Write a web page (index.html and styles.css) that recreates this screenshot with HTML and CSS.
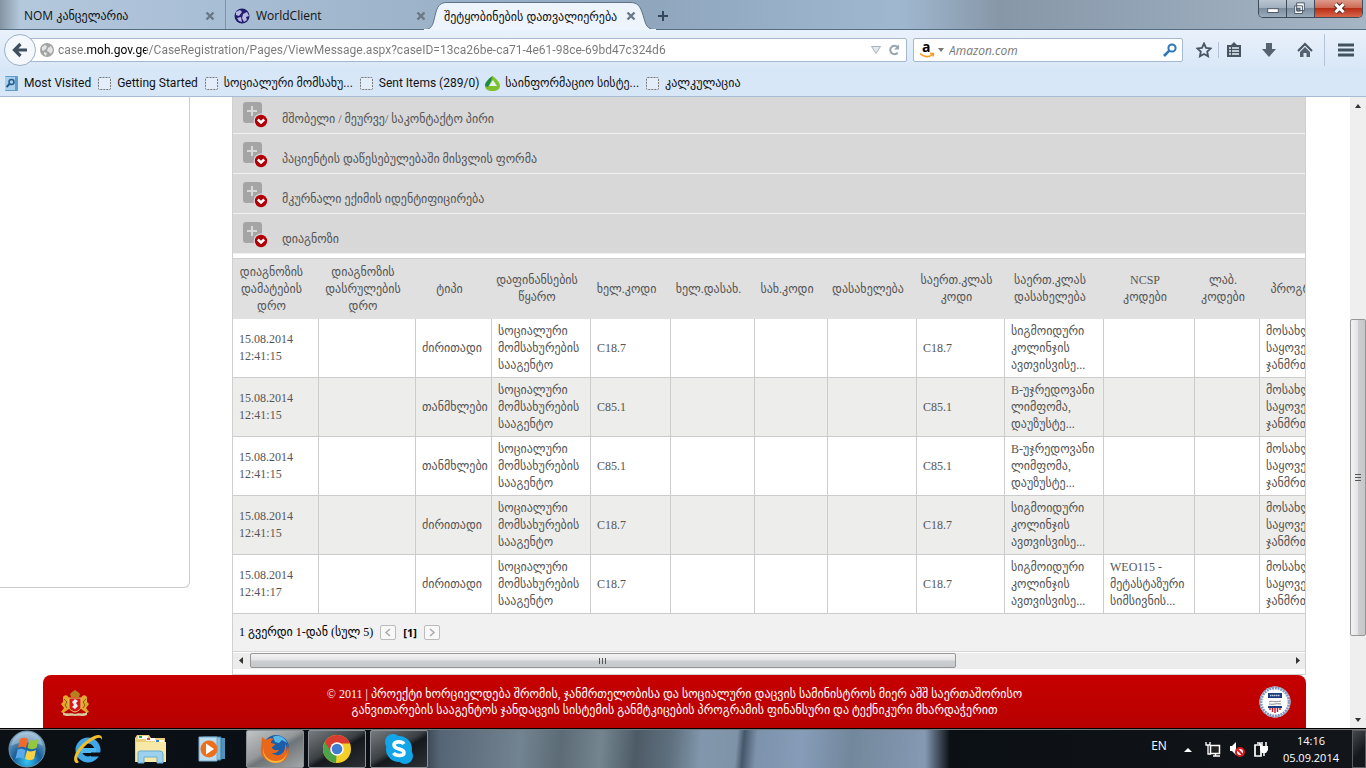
FILE: index.html
```html
<!DOCTYPE html>
<html lang="ka">

<head>
    <meta charset="UTF-8">
    <meta name="viewport" content="width=device-width, initial-scale=1.0">
    <title>შეტყობინების დათვალიერება</title>
    <link rel="stylesheet" href="styles.css">
</head>

<body>
    <!-- shared shapes -->
    <svg class="defs" width="0" height="0" aria-hidden="true">
        <defs>
            <symbol id="i-close" viewBox="0 0 10 10">
                <path d="M1.5 1.5l7 7M8.500 1.500l-7 7" stroke="#6b7785" stroke-width="2.400" fill="none" />
            </symbol>
            <symbol id="i-blank" viewBox="0 0 15 15">
                <rect x="1.500" y="1.500" width="12" height="12" rx="1" fill="#e4eefa" stroke="#777" stroke-dasharray="2 1" />
            </symbol>
            <symbol id="i-plus" viewBox="0 0 26 26">
                <rect x="0" y="0" width="19" height="21" rx="3" fill="#a5a5a5" />
                <path d="M9 4v10M4 9h10" stroke="#d8d8d8" stroke-width="2" />
                <circle cx="18" cy="19" r="7.500" fill="#d8d8d8" />
                <circle cx="18" cy="19" r="6.200" fill="#b00006" />
                <path d="M14.800 17.500l3.200 3 3.200-3" stroke="#fff" stroke-width="2.400" fill="none" />
            </symbol>
        </defs>
    </svg>

    <div class="window">
        <header class="titlebar">
            <div class="tabs">
                <button class="tab"><span class="tab-text">NOM კანცელარია</span><svg class="tab-close"><use href="#i-close" /></svg></button>
                <button class="tab">
                    <svg class="favicon" viewBox="0 0 16 16">
                        <circle cx="8" cy="8" r="7.500" fill="#221c6e" />
                        <path d="M2 4l4-2 2 2-3 4-3-1zM9 6l4-2 2 4-3 1 1 3-3 2-2-4zM3 10l4-1 1 5-3-1z" fill="#b9b8e2" />
                    </svg>
                    <span class="tab-text">WorldClient</span><svg class="tab-close"><use href="#i-close" /></svg>
                </button>
                <button class="tab active">
                    <svg class="tab-shape" viewBox="0 0 232 28" preserveAspectRatio="none">
                        <path d="M0 28C10 27 9 20 12 10C14 3 17 .5 23 .5H206C214 .5 216 4 219 13C222 23 222 27 232 28Z" fill="#edf4fc" stroke="#5d7387" />
                        <path d="M0 28H232" stroke="#edf4fc" stroke-width="2" />
                    </svg>
                    <span class="tab-text">შეტყობინების დათვალიერება</span><svg class="tab-close"><use href="#i-close" /></svg>
                </button>
                <button class="new-tab" aria-label="New tab"><svg viewBox="0 0 12 12"><path d="M6 1v10M1 6h10" stroke="#35475a" stroke-width="2" /></svg></button>
            </div>
            <div class="win-buttons">
                <button aria-label="Minimize"><svg viewBox="0 0 28 18"><rect x="9" y="9" width="11" height="4" fill="#fff" stroke="#4a5666" /></svg></button>
                <button aria-label="Restore"><svg viewBox="0 0 28 18"><path d="M10 3h8v8h-8zM8 6h8v8H8z" fill="#fff" stroke="#4a5666" /><rect x="10.500" y="8.500" width="3" height="3" fill="#71859a" stroke="#4a5666" /></svg></button>
                <button class="win-close" aria-label="Close"><svg viewBox="0 0 46 18"><path d="M20 4l8 8M28 4l-8 8" stroke="#5a2a25" stroke-width="5" /><path d="M20 4l8 8M28 4l-8 8" stroke="#fff" stroke-width="3" /></svg></button>
            </div>
        </header>

        <nav class="toolbar">
            <div class="nav-row">
                <button class="back" aria-label="Back"><svg viewBox="0 0 16 16"><path d="M8.500 2L2.500 8l6 6M3 8h12" fill="none" stroke="#3f4f5f" stroke-width="3.200" /></svg></button>
                <div class="url-box">
                    <svg class="globe" viewBox="0 0 14 14">
                        <circle cx="7" cy="7" r="7" fill="#a3a3a3" />
                        <path d="M2 4l3-2 2 1-1 3-3 2-1-1zM8 5l3-2 2 4-2 4-2-2-2-1zM4 9l3 1-1 3-2-2z" fill="#e4e4e4" />
                    </svg>
                    <input class="url" type="text" aria-label="Address" value="case.moh.gov.ge/CaseRegistration/Pages/ViewMessage.aspx?caseID=13ca26be-ca71-4e61-98ce-69bd47c324d6">
                    <svg class="url-drop" viewBox="0 0 10 8"><path d="M.5.5h9L5 7.500z" fill="#e3e8ed" stroke="#a8b3bf" /></svg>
                    <svg class="reload" viewBox="0 0 13 13"><path d="M10.500 9.500a4.600 4.600 0 1 1 0-6" fill="none" stroke="#98a5b1" stroke-width="2.200" /><path d="M12 .5v5.500H6.500z" fill="#98a5b1" /></svg>
                </div>
                <div class="search-box">
                    <svg class="amazon" viewBox="0 0 16 16">
                        <text x="3" y="10" class="amazon-a">a</text>
                        <path d="M1 11.500c4 4 9 4 12.500 1M11 11.500h3.300v3" fill="none" stroke="#f79a1e" stroke-width="1.600" />
                    </svg>
                    <svg class="caret" viewBox="0 0 6 4"><path d="M0 0h6L3 4z" fill="#777" /></svg>
                    <input class="search" type="text" placeholder="Amazon.com" aria-label="Search">
                    <svg class="lens" viewBox="0 0 14 14"><circle cx="9" cy="5" r="3.600" fill="none" stroke="#2d74b8" stroke-width="2" /><path d="M6.300 7.700L1 13" stroke="#2d74b8" stroke-width="2.600" /></svg>
                </div>
                <button class="tool star" aria-label="Bookmark"><svg viewBox="0 0 16 16"><path d="M8 1.500l2 4.300 4.700.6-3.500 3.200.9 4.700L8 12l-4.100 2.300.9-4.700L1.300 6.400 6 5.800z" fill="none" stroke="#475461" stroke-width="1.800" /></svg></button>
                <button class="tool clip" aria-label="Bookmarks list"><svg viewBox="0 0 16 16"><path d="M1 3h4l3-3 3 3h4v12H1z" fill="#475461" /><path d="M3 6h2M6 6h7M3 9h2M6 9h7M3 12h2M6 12h7" stroke="#e6effa" stroke-width="1.500" /></svg></button>
                <button class="tool down" aria-label="Downloads"><svg viewBox="0 0 16 16"><path d="M5 1h6v6h4l-7 8-7-8h4z" fill="#55626f" /></svg></button>
                <button class="tool home" aria-label="Home"><svg viewBox="0 0 16 16"><path d="M1 9l7-7 7 7" fill="none" stroke="#475461" stroke-width="2" /><path d="M3 10l5-5 5 5v5H9.500v-4h-3v4H3z" fill="#55626f" /></svg></button>
                <button class="tool menu" aria-label="Menu"><svg viewBox="0 0 16 16"><path d="M0 3h16M0 8h16M0 13h16" stroke="#43525f" stroke-width="3" /></svg></button>
            </div>
            <div class="bookmarks">
                <a href="#"><svg viewBox="0 0 15 15"><rect x="1" y="0" width="13" height="15" rx="1" fill="#5f9cc8" /><rect x="1" y="1" width="10" height="13" fill="#a8d0ec" /><circle cx="7.500" cy="6" r="2.500" fill="none" stroke="#245b8c" stroke-width="1.500" /><path d="M5.500 8L2.500 11" stroke="#245b8c" stroke-width="2" /></svg>Most Visited</a>
                <a href="#"><svg><use href="#i-blank" /></svg>Getting Started</a>
                <a href="#"><svg><use href="#i-blank" /></svg>სოციალური მომსახუ...</a>
                <a href="#"><svg><use href="#i-blank" /></svg>Sent Items (289/0)</a>
                <a href="#"><svg viewBox="0 0 15 15"><path d="M7.500 0C2 4 0 7 0 10c0 3 3 5 7.500 5S15 13 15 10c0-3-3-7-7.500-10z" fill="#7fc02c" /><path d="M7.500 0C2 4 0 7 0 10l3 1 3-6z" fill="#1d8a4d" /><path d="M8 4l4 6H4z" fill="#e4f3f4" /></svg>საინფორმაციო სისტე...</a>
                <a href="#"><svg><use href="#i-blank" /></svg>კალკულაცია</a>
            </div>
        </nav>

        <div class="viewport">
            <div class="page">
                <div class="columns">
                    <aside class="side"></aside>
                    <main class="panel">
                        <ul class="sections">
                            <li><button><svg><use href="#i-plus" /></svg><span>მშობელი / მეურვე/ საკონტაქტო პირი</span></button></li>
                            <li><button><svg><use href="#i-plus" /></svg><span>პაციენტის დაწესებულებაში მისვლის ფორმა</span></button></li>
                            <li><button><svg><use href="#i-plus" /></svg><span>მკურნალი ექიმის იდენტიფიცირება</span></button></li>
                            <li><button><svg><use href="#i-plus" /></svg><span>დიაგნოზი</span></button></li>
                        </ul>
                        <div class="table-wrap">
                            <table>
                                <colgroup>
                                    <col class="c-added"><col class="c-ended"><col class="c-type"><col class="c-fund"><col class="c-code"><col class="c-hname"><col class="c-scode"><col class="c-name"><col class="c-icd"><col class="c-icdname"><col class="c-ncsp"><col class="c-lab"><col class="c-prog">
                                </colgroup>
                                <thead>
                                    <tr>
                                        <th>დიაგნოზის<br>დამატების<br>დრო</th>
                                        <th>დიაგნოზის<br>დასრულების<br>დრო</th>
                                        <th>ტიპი</th>
                                        <th>დაფინანსების<br>წყარო</th>
                                        <th>ხელ.კოდი</th>
                                        <th>ხელ.დასახ.</th>
                                        <th>სახ.კოდი</th>
                                        <th>დასახელება</th>
                                        <th>საერთ.კლას<br>კოდი</th>
                                        <th>საერთ.კლას<br>დასახელება</th>
                                        <th>NCSP<br>კოდები</th>
                                        <th>ლაბ.<br>კოდები</th>
                                        <th>პროგრამა</th>
                                    </tr>
                                </thead>
                                <tbody>
                                    <tr>
                                        <td>15.08.2014<br>12:41:15</td><td></td><td>ძირითადი</td>
                                        <td>სოციალური<br>მომსახურების<br>სააგენტო</td>
                                        <td>C18.7</td><td></td><td></td><td></td><td>C18.7</td>
                                        <td>სიგმოიდური<br>კოლინჯის<br>ავთვისვისე...</td>
                                        <td></td><td></td>
                                        <td>მოსახლეობის<br>საყოველთაო<br>ჯანმრთელობა</td>
                                    </tr>
                                    <tr>
                                        <td>15.08.2014<br>12:41:15</td><td></td><td>თანმხლები</td>
                                        <td>სოციალური<br>მომსახურების<br>სააგენტო</td>
                                        <td>C85.1</td><td></td><td></td><td></td><td>C85.1</td>
                                        <td>B-უჯრედოვანი<br>ლიმფომა,<br>დაუზუსტე...</td>
                                        <td></td><td></td>
                                        <td>მოსახლეობის<br>საყოველთაო<br>ჯანმრთელობა</td>
                                    </tr>
                                    <tr>
                                        <td>15.08.2014<br>12:41:15</td><td></td><td>თანმხლები</td>
                                        <td>სოციალური<br>მომსახურების<br>სააგენტო</td>
                                        <td>C85.1</td><td></td><td></td><td></td><td>C85.1</td>
                                        <td>B-უჯრედოვანი<br>ლიმფომა,<br>დაუზუსტე...</td>
                                        <td></td><td></td>
                                        <td>მოსახლეობის<br>საყოველთაო<br>ჯანმრთელობა</td>
                                    </tr>
                                    <tr>
                                        <td>15.08.2014<br>12:41:15</td><td></td><td>ძირითადი</td>
                                        <td>სოციალური<br>მომსახურების<br>სააგენტო</td>
                                        <td>C18.7</td><td></td><td></td><td></td><td>C18.7</td>
                                        <td>სიგმოიდური<br>კოლინჯის<br>ავთვისვისე...</td>
                                        <td></td><td></td>
                                        <td>მოსახლეობის<br>საყოველთაო<br>ჯანმრთელობა</td>
                                    </tr>
                                    <tr>
                                        <td>15.08.2014<br>12:41:17</td><td></td><td>ძირითადი</td>
                                        <td>სოციალური<br>მომსახურების<br>სააგენტო</td>
                                        <td>C18.7</td><td></td><td></td><td></td><td>C18.7</td>
                                        <td>სიგმოიდური<br>კოლინჯის<br>ავთვისვისე...</td>
                                        <td>WEO115 -<br>მეტასტაზური<br>სიმსივნის...</td><td></td>
                                        <td>მოსახლეობის<br>საყოველთაო<br>ჯანმრთელობა</td>
                                    </tr>
                                </tbody>
                            </table>
                        </div>
                        <div class="pager">
                            <span>1 გვერდი 1-დან (სულ 5)</span>
                            <button aria-label="Previous"><svg viewBox="0 0 14 13"><path d="M9 3L5 6.500 9 10" fill="none" stroke="#aaa" stroke-width="1.500" /></svg></button>
                            <b>[1]</b>
                            <button aria-label="Next"><svg viewBox="0 0 14 13"><path d="M5 3l4 3.500L5 10" fill="none" stroke="#aaa" stroke-width="1.500" /></svg></button>
                        </div>
                        <div class="hscroll">
                            <svg viewBox="0 0 17 15"><path d="M10 4v7L6 7.500z" fill="#333" /></svg>
                            <div class="htrack"><div class="hthumb"><i></i><i></i><i></i></div></div>
                            <svg viewBox="0 0 17 15"><path d="M8 4v7l4-3.500z" fill="#333" /></svg>
                        </div>
                    </main>
                </div>
                <footer class="footer">
                    <svg class="arms" viewBox="0 0 30 26">
                        <path d="M3 7c2-3 5-2 6 1l1 5-1 6-6 4-2-1 3-4-3-4 2-2zM27 7c-2-3-5-2-6 1l-1 5 1 6 6 4 2-1-3-4 3-4-2-2z" fill="#e0a92c" />
                        <path d="M4 9l3 3-2 3 2 3M26 9l-3 3 2 3-2 3" fill="none" stroke="#8d5d18" />
                        <path d="M10 4l2-2 3-2 3 2 2 2-1 3h-8z" fill="#b3821e" />
                        <path d="M9 8h12v8c0 4-3 5-6 6-3-1-6-2-6-6z" fill="#d41a1c" stroke="#e9c56a" />
                        <path d="M15 9l3 2-2 2 2 3-3 3-3-2 2-2-2-3z" fill="#eee" />
                        <path d="M3 22c5 3 8 0 12 2 4-2 7 1 12-2v3c-5 2-8 0-12 1-4-1-7 1-12-1z" fill="#d8cda0" />
                    </svg>
                    <p>© 2011 | პროექტი ხორციელდება შრომის, ჯანმრთელობისა და სოციალური დაცვის სამინისტროს მიერ აშშ საერთაშორისო<br>განვითარების სააგენტოს ჯანდაცვის სისტემის განმტკიცების პროგრამის ფინანსური და ტექნიკური მხარდაჭერით</p>
                    <svg class="usaid" viewBox="0 0 32 32">
                        <circle cx="16" cy="16" r="15.500" fill="#fff" />
                        <circle cx="16" cy="16" r="13.800" fill="none" stroke="#7f97c0" stroke-width="2.400" stroke-dasharray="2 .8" />
                        <circle cx="16" cy="16" r="15.200" fill="none" stroke="#8a9dbf" />
                        <rect x="9" y="7" width="14" height="5" fill="#1b3c7d" />
                        <path d="M11 9.500h10" stroke="#c5d0e5" stroke-width="1.600" stroke-dasharray="1.500 .5" />
                        <path d="M10 16c3-2 5 1 12-1M10 18c4 1 7-1 12 0" fill="none" stroke="#888" />
                        <path d="M9 20h14v2H9z" fill="#1b3c7d" />
                        <path d="M10 22h12c0 3-3 5-6 5s-6-2-6-5z" fill="#fff" />
                        <path d="M11 22v2M13.500 22v4M16 22v5M18.500 22v4M21 22v2" stroke="#cc1626" stroke-width="1.400" />
                    </svg>
                </footer>
            </div>
            <div class="vscroll">
                <svg viewBox="0 0 16 17"><path d="M5 11h6L8 7z" fill="#333" /></svg>
                <div class="vtrack"><div class="vthumb"><i></i><i></i><i></i></div></div>
                <svg viewBox="0 0 16 17"><path d="M5 7h6l-3 4z" fill="#333" /></svg>
            </div>
        </div>
    </div>

    <footer class="taskbar">
        <button class="start" aria-label="Start">
            <svg viewBox="0 0 38 38">
                <defs>
                    <radialGradient id="orb" cx=".5" cy=".85" r=".85"><stop offset="0" stop-color="#32c6f4" /><stop offset=".45" stop-color="#1a5f9b" /><stop offset="1" stop-color="#8fb6d0" /></radialGradient>
                </defs>
                <circle cx="19" cy="19" r="18" fill="url(#orb)" stroke="#6f94ae" />
                <path d="M3 16C5 6 12 2 19 2s14 4 16 14c-9-5-23-5-32 0z" fill="#fff" opacity=".3" />
                <path d="M12 9c3-2 6-1 8 0l-2 9c-3-1-5-2-8 0z" fill="#ef6a2b" />
                <path d="M21.500 9.500c3 1.500 6 1 9-.5l-2 9c-3 1.500-6 1.500-9 0z" fill="#93c83e" />
                <path d="M9.500 20c3-2 5-1 8 0l-2 9c-3-1-5-2-8 0z" fill="#5aa9ea" />
                <path d="M19 20.500c3 1.500 6 1 9-.5l-2 9c-3 1.500-6 1.500-9 0z" fill="#fbd143" />
            </svg>
        </button>
        <button class="quick" aria-label="Internet Explorer">
            <svg viewBox="0 0 34 32">
                <circle cx="17" cy="17" r="9.500" fill="none" stroke="#3fa7e8" stroke-width="6" />
                <path d="M10 15h15v5H10z" fill="#4fb5ee" />
                <path d="M20 19.500h10v4H20z" fill="#0c1014" />
                <path d="M5 30C-1 26 8 12 18 6c7-5 14-6 13 1-1-4-6-2-12 2C10 15 3 26 8 29c-1 1-2 1-3 1z" fill="#f3bd2c" />
            </svg>
        </button>
        <button class="quick" aria-label="Explorer">
            <svg viewBox="0 0 34 32">
                <path d="M2 5l2-3h12l2 3h14v24H2z" fill="#e8cf78" />
                <path d="M3 9h30v20H3z" fill="#f8e8a6" />
                <path d="M5 3h10v3H5zM13 5h9v3h-9zM22 7h9v2h-9z" fill="#fff" />
                <path d="M6 3h3v2H6z" fill="#23a338" /><path d="M14 5h3v2h-3z" fill="#d8442c" /><path d="M23 7h3v2h-3z" fill="#3f7ed8" />
                <path d="M5 30V20q0-2 2-2h20q3 0 3 3v9h-6v-6H11v6z" fill="#9cd2ee" stroke="#68abd3" />
            </svg>
        </button>
        <button class="quick player" aria-label="Media Player">
            <svg viewBox="0 0 34 32">
                <path d="M12 5h18v21H12z" fill="#4f93bd" /><path d="M8 4h18v23H8z" fill="#88bfe0" stroke="#3c7ba4" /><path d="M4 4h18v24H4z" fill="#bcdcef" stroke="#78acca" />
                <circle cx="14" cy="16" r="8.500" fill="#ee6f1b" />
                <path d="M11 10.500l8 5.500-8 5.500z" fill="#fff" />
            </svg>
        </button>
        <button class="app current" aria-label="Firefox">
            <svg viewBox="0 0 32 32">
                <circle cx="17" cy="15" r="13" fill="#1c5ca8" />
                <path d="M14 4c5-3 12 0 14 6l-5-3-3 3-4-1z" fill="#55b7e8" />
                <path d="M3 4l4 3c3-2 6-2 8-1-3 1-3 3-3 4l4 1c0 2-3 2-3 4 2 3 5 2 7 2-2 4-7 3-7 3 6 5 14 1 13-9 2 3 2 5 1 8 2-3 2-6 1-9 5 11-1 20-11 20C8 30 0 23 2 14z" fill="#e8681a" />
                <path d="M4 14c0 9 6 14 13 14 6 0 10-4 11-9-1 7-5 11-11 11C9 30 3 24 4 14z" fill="#f8b63a" />
            </svg>
        </button>
        <button class="app" aria-label="Chrome">
            <svg viewBox="0 0 32 32">
                <circle cx="16" cy="16" r="14" fill="#f5cf27" />
                <path d="M16 16L3.900 9A14 14 0 0 0 15 30z" fill="#4ba447" />
                <path d="M3.900 9A14 14 0 0 1 29 10.500H16L10 19z" fill="#d93b2e" />
                <circle cx="16" cy="16" r="6.800" fill="#fff" /><circle cx="16" cy="16" r="5.300" fill="#3f7dd0" />
            </svg>
        </button>
        <button class="app" aria-label="Skype">
            <svg viewBox="0 0 32 32">
                <circle cx="16" cy="16" r="13" fill="#12a5e8" /><circle cx="10" cy="9" r="8" fill="#12a5e8" /><circle cx="22" cy="23" r="8" fill="#12a5e8" />
                <path d="M21 11c-2-3-10-3-10 1 0 5 10 3 10 7.500 0 4-8 4-10.500.5" fill="none" stroke="#fff" stroke-width="3.600" />
            </svg>
        </button>
        <div class="tray">
            <span class="lang">EN</span>
            <svg class="up" viewBox="0 0 8 4"><path d="M0 4h8L4 0z" fill="#fff" /></svg>
            <svg class="t-icon" viewBox="0 0 16 16"><path d="M5.500 4.500h9v8h-9z" fill="#222" stroke="#fff" stroke-width="1.500" /><path d="M8 15h7M10.500 12v3" stroke="#fff" stroke-width="1.500" /><path d="M1 1v3h4V1M3 4v9h3" fill="none" stroke="#fff" stroke-width="1.300" /></svg>
            <svg class="t-icon" viewBox="0 0 16 16"><path d="M1 5h2l4-4v13l-4-4H1z" fill="#fff" /><circle cx="11" cy="11" r="4" fill="#fff" stroke="#d8181c" stroke-width="2" /><path d="M8.500 8.500l5 5" stroke="#d8181c" stroke-width="2" /></svg>
            <svg class="t-icon" viewBox="0 0 16 16"><path d="M2 4h6v11H2zM4 2h3v2" fill="none" stroke="#fff" stroke-width="1.700" /><path d="M7 5h8v4l-2 3H9L7 9z" fill="#fff" /><path d="M9 1v4M13 1v4M11 12v3" stroke="#fff" stroke-width="1.500" /></svg>
            <time class="clock">14:16<br>05.09.2014</time>
        </div>
        <button class="desktop" aria-label="Show desktop"></button>
    </footer>
</body>

</html>
```

FILE: styles.css
```css
* {
    box-sizing: border-box;
}

body {
    margin: 0;
    height: 100vh;
    display: flex;
    flex-direction: column;
    overflow: hidden;
    background: #fff;
    font-family: "Liberation Serif", "DejaVu Sans", serif;
    font-size: 12px;
    color: #555;
}

button {
    margin: 0;
    padding: 0;
    border: 0;
    background: none;
    font: inherit;
    color: inherit;
}

svg {
    display: block;
    flex: none;
}

.defs {
    position: absolute;
}

.window {
    flex: 1;
    min-height: 0;
    display: flex;
    flex-direction: column;
}

/* title bar and tabs */
.titlebar {
    height: 30px;
    display: flex;
    justify-content: space-between;
    align-items: flex-start;
    padding-right: 3px;
    border-bottom: 1px solid #566c81;
    background: linear-gradient(90deg, #8494a3 0, #b4c8dc 20px, #a9bfd6 200px, #9db3c9 420px, #8fa6bd 650px, #9fb8d0 900px, #8797a8 1000px, #93a4b6 1150px, #a6b5c4 100%);
    font-family: "Open Sans", "DejaVu Sans", sans-serif;
    color: #111;
}

.tabs {
    display: flex;
    align-items: flex-start;
    padding-left: 16px;
}

.tab {
    position: relative;
    width: 210px;
    height: 29px;
    display: flex;
    align-items: center;
    gap: 6px;
    padding: 2px 10px 0 8px;
    border-right: 1px solid #8193a5;
    text-align: left;
}

.tab + .tab {
    border-right: 0;
}

.tab-text {
    flex: 1;
    position: relative;
    white-space: nowrap;
}

.tab-close {
    width: 10px;
    height: 10px;
    position: relative;
}

.favicon {
    width: 16px;
    height: 16px;
}

.active.tab {
    height: 30px;
}

.tab-shape {
    position: absolute;
    left: -12px;
    top: 2px;
    width: 232px;
    height: 28px;
}

.new-tab {
    width: 12px;
    height: 12px;
    margin: 10px 0 0 11px;
}

.win-buttons {
    display: flex;
    border: 1px solid #3e4b59;
    border-top: 0;
    border-radius: 0 0 5px 5px;
    overflow: hidden;
}

.win-buttons button {
    width: 28px;
    height: 17px;
    border-right: 1px solid #3e4b59;
    background: linear-gradient(#b9c5d1 0, #a1afbe 45%, #7c8da0 50%, #9aabbc 100%);
}

.win-buttons .win-close {
    width: 47px;
    border-right: 0;
    background: linear-gradient(#dd9a8b 0, #cf6a55 45%, #b92d15 50%, #d8664a 100%);
}

/* toolbar */
.toolbar {
    height: 67px;
    background: linear-gradient(#e9f1fb, #d8e7f7 60%);
    border-bottom: 1px solid #a7bcd3;
    font-family: Roboto, "DejaVu Sans", sans-serif;
}

.nav-row {
    display: flex;
    align-items: center;
    height: 40px;
    padding: 0 12px 0 4px;
}

.back {
    width: 32px;
    height: 32px;
    padding: 7px;
    border: 1px solid #9db0c4;
    border-radius: 50%;
    background: #f4f8fd;
    position: relative;
    z-index: 1;
}

.url-box,
.search-box {
    display: flex;
    align-items: center;
    height: 24px;
    border: 1px solid #a4b9d0;
    border-radius: 2px;
    background: #fff;
}

.url-box {
    flex: 1;
    margin-left: -8px;
    padding: 0 6px 0 11px;
}

.globe {
    width: 14px;
    height: 14px;
}

input {
    flex: 1;
    min-width: 0;
    border: 0;
    padding: 0;
    outline: 0;
    background: none;
    font: inherit;
}

/* the host part of the address is darker than the rest */
.url {
    margin-left: 4px;
    background: linear-gradient(90deg, #777 27px, #000 27px, #000 88px, #777 88px);
    background-clip: text;
    -webkit-background-clip: text;
    color: transparent;
}

.url-drop {
    width: 10px;
    height: 8px;
    margin-right: 7px;
}

.reload {
    width: 12px;
    height: 12px;
}

.search-box {
    width: 270px;
    margin-left: 6px;
    padding: 0 5px;
}

.amazon {
    width: 16px;
    height: 16px;
}

.amazon-a {
    font: bold 14px "Open Sans", sans-serif;
}

.caret {
    width: 6px;
    height: 4px;
    margin: 0 5px 0 3px;
}

.search {
    font-family: "Open Sans", sans-serif;
}

.search::placeholder {
    color: #777;
    font-style: italic;
}

.lens {
    width: 14px;
    height: 14px;
}

.tool {
    width: 16px;
}

.star {
    margin-left: 13px;
}

.clip {
    width: 24px;
    margin-left: 6px;
    padding-left: 7px;
    border-left: 1px solid #b4c4d6;
}

.down {
    margin-left: 19px;
}

.home {
    margin-left: 20px;
}

.menu {
    width: 30px;
    margin-left: 11px;
    padding: 8px 0 8px 13px;
    border-left: 1px solid #b4c4d6;
}

.bookmarks {
    display: flex;
    align-items: center;
    gap: 6px;
    height: 26px;
    padding: 0 4px;
}

.bookmarks a {
    display: flex;
    align-items: center;
    gap: 5px;
    color: #111;
    text-decoration: none;
    white-space: nowrap;
}

.bookmarks svg {
    width: 15px;
    height: 15px;
}

/* page */
.viewport {
    flex: 1;
    min-height: 0;
    display: flex;
    overflow: hidden;
}

.page {
    flex: 1;
    min-width: 0;
    display: flex;
    flex-direction: column;
    padding-right: 44px;
}

.columns {
    display: flex;
    align-items: flex-start;
}

.side {
    width: 190px;
    height: 491px;
    margin-right: 42px;
    border: 1px solid #ccc;
    border-width: 0 1px 1px 0;
    border-radius: 0 0 6px 0;
}

.panel {
    flex: 1;
    min-width: 0;
    height: 578px;
    border: 1px solid #d0d0d0;
    border-top: 0;
}

.sections {
    list-style: none;
    margin: -3px 0 4px;
    padding: 0;
}

.sections button {
    display: flex;
    width: 100%;
    height: 40px;
    gap: 13px;
    padding: 8px 10px 0;
    background: #d8d8d8;
    border-bottom: 1px solid #f2f2f2;
    text-align: left;
}

.sections span {
    padding-top: 9px;
    line-height: 16px;
}

.sections svg {
    width: 26px;
    height: 26px;
}

.table-wrap {
    overflow: hidden;
    border-top: 1px solid #d0d0d0;
}

table {
    width: 1117px;
    table-layout: fixed;
    border-collapse: separate;
    border-spacing: 0;
    line-height: 17px;
    white-space: nowrap;
}

.c-added { width: 86px; }
.c-ended { width: 97px; }
.c-type { width: 76px; }
.c-fund { width: 99px; }
.c-code { width: 80px; }
.c-hname { width: 84px; }
.c-scode { width: 73px; }
.c-name { width: 89px; }
.c-icd { width: 88px; }
.c-icdname { width: 99px; }
.c-ncsp { width: 91px; }
.c-lab { width: 65px; }
.c-prog { width: 90px; }

th {
    height: 60px;
    padding: 0 9px 0 0;
    background: #e0e0e0;
    font-weight: normal;
    text-align: center;
}

td {
    height: 59px;
    padding: 0 0 0 6px;
    border-right: 1px solid #ccc;
    border-bottom: 1px solid #ccc;
}

tbody tr:nth-child(even) {
    background: #ededeb;
}

.pager {
    display: flex;
    align-items: center;
    height: 38px;
    padding: 0 6px;
    background: #f1f1f1;
    border-bottom: 1px solid #d4d4d4;
    color: #000;
}

.pager button {
    width: 16px;
    height: 15px;
    margin: 0 7px;
    border: 1px solid #bbb;
    border-radius: 2px;
    background: #f8f8f8;
}

.pager b {
    font-family: "Open Sans", sans-serif;
    font-size: 11px;
}

/* scrollbars */
.hscroll {
    display: flex;
    height: 16px;
    margin-top: 1px;
    background: #ececec;
}

.hscroll svg {
    width: 17px;
    height: 15px;
}

.htrack {
    flex: 1;
}

.hthumb {
    width: 68%;
    height: 15px;
    display: flex;
    align-items: center;
    justify-content: center;
    gap: 2px;
    border: 1px solid #979797;
    border-radius: 2px;
    background: linear-gradient(#f3f3f3 0, #e4e4e6 48%, #cdced1 52%, #c6c7ca 100%);
}

.hthumb i {
    width: 1px;
    height: 6px;
    background: #555;
}

.vscroll {
    width: 16px;
    display: flex;
    flex-direction: column;
    background: #efefef;
}

.vscroll svg {
    width: 16px;
    height: 17px;
}

.vtrack {
    flex: 1;
    display: flex;
    flex-direction: column;
    padding-top: 205px;
}

.vthumb {
    height: 317px;
    display: flex;
    flex-direction: column;
    align-items: center;
    justify-content: center;
    gap: 2px;
    border: 1px solid #979797;
    border-radius: 2px;
    background: linear-gradient(90deg, #f3f3f3 0, #e4e4e6 48%, #cdced1 52%, #c6c7ca 100%);
}

.vthumb i {
    width: 6px;
    height: 1px;
    background: #555;
}

/* page footer */
.footer {
    flex: 1;
    display: flex;
    align-items: flex-start;
    justify-content: space-between;
    margin-left: 43px;
    padding: 11px 15px 0 17px;
    border-radius: 8px 8px 0 0;
    background: linear-gradient(#c60000, #b80000);
    color: #fff;
}

.footer p {
    margin: 0;
    line-height: 16px;
    text-align: center;
    white-space: nowrap;
}

.arms {
    width: 30px;
    height: 26px;
    margin-top: 4px;
}

.usaid {
    width: 32px;
    height: 32px;
}

/* taskbar */
.taskbar {
    height: 40px;
    display: flex;
    align-items: center;
    border-top: 1px solid #000;
    box-shadow: inset 0 1px 0 #75777a;
    background:
        linear-gradient(90deg, #0b1015 0, #0a0f16 400px, transparent 440px, transparent 925px, #0b1014 950px, #12151a 100%),
        linear-gradient(95deg, #5b6c7c 0, #566575 440px, #728391 520px, #5c6b75 560px, #74858f 600px, #4d5b66 635px, #5f707e 670px, #8297ad 700px, #7f93a8 735px, #45576a 742px, #7d92ab 755px, #869cb8 800px, #73879c 850px, #8499b2 920px);
    font-family: "Open Sans", sans-serif;
    color: #fff;
}

.start {
    width: 38px;
    margin: 0 25px 0 8px;
}

.quick {
    width: 34px;
    margin-right: 28px;
}

.quick.player {
    margin-right: 17px;
}

.app {
    width: 58px;
    height: 38px;
    margin-right: 4px;
    padding: 2px 12px;
    border: 1px solid #8b9196;
    border-radius: 2px;
    background: linear-gradient(150deg, #777b7f 0, #3c4146 45%, #15191e 55%, #2c3136 100%);
}

.app.current {
    background: linear-gradient(150deg, #c2c4c6 0, #94989b 45%, #6f7478 55%, #a5a8aa 100%);
}

.tray {
    display: flex;
    align-items: center;
    margin-left: auto;
}

.lang {
    margin: -7px 17px 0 0;
}

.up {
    width: 8px;
    height: 4px;
    margin: 2px 13px 0 0;
}

.t-icon {
    width: 16px;
    height: 16px;
    margin-right: 8px;
}

.clock {
    margin-left: 6px;
    font-size: 11px;
    line-height: 17px;
    text-align: center;
}

.desktop {
    width: 14px;
    height: 38px;
    margin-left: 13px;
    border: 1px solid #5a5e63;
    background: linear-gradient(135deg, #45494e, #15181c 60%);
}
```
